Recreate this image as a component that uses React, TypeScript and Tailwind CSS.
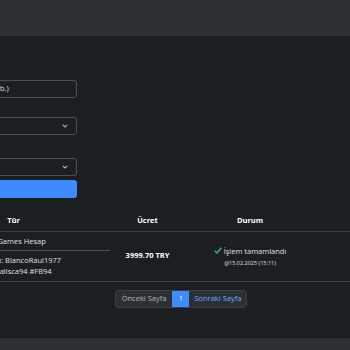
import React from 'react';

const Chevron = () => (
  <svg width="6" height="4" viewBox="0 0 6 4" className="shrink-0">
    <path d="M0.8 0.8 L3 3 L5.2 0.8" fill="none" stroke="#adb5bd" strokeWidth="1.1" />
  </svg>
);

const Check = () => (
  <svg width="8" height="7" viewBox="0 0 8 7" className="shrink-0">
    <path d="M0.8 3.8 L3 6 L7.4 0.8" fill="none" stroke="#2fb380" strokeWidth="1.5" />
  </svg>
);

export default function App() {
  return (
    <div
      className="w-[350px] h-[350px] overflow-hidden bg-[#1b1f22] text-[#dee2e6] flex flex-col"
      style={{ fontFamily: '"Open Sans", "Noto Sans", sans-serif' }}
    >
      {/* navbar */}
      <div className="h-[36px] shrink-0 bg-[#2b3035]" />

      <div className="flex-1 flex flex-col">
        {/* filter form, partly out of view on the left */}
        <div className="w-[179px] -ml-[102px] mt-[44px] flex flex-col text-[7.5px]">
          <div className="h-[18px] border border-[#495057] rounded-[3px] flex items-center px-[8px]">
            <span className="whitespace-nowrap">Ara (kullanıcı adı, e-posta vb.)</span>
          </div>
          <label className="h-[19px] flex items-center">Tür</label>
          <div className="h-[18px] border border-[#495057] rounded-[3px] flex items-center justify-between px-[8px]">
            <span>Tümü</span>
            <Chevron />
          </div>
          <label className="h-[23px] flex items-center">Durum</label>
          <div className="h-[18px] border border-[#495057] rounded-[3px] flex items-center justify-between px-[8px]">
            <span>Tümü</span>
            <Chevron />
          </div>
          <button className="mt-[4px] h-[18px] rounded-[3px] bg-[#3d8bfd] text-white">Filtrele</button>
        </div>

        {/* orders table */}
        <table className="mt-[12px] -ml-[88px] w-[470px] table-fixed border-collapse text-[7.5px]">
          <colgroup>
            <col className="w-[203px]" />
            <col className="w-[65px]" />
            <col className="w-[140px]" />
            <col />
          </colgroup>
          <thead>
            <tr className="h-[21px] border-b border-[#3a3f44] font-bold text-white">
              <th className="text-center pt-[1px]">Tür</th>
              <th className="text-center pt-[1px]">Ücret</th>
              <th className="text-center pt-[1px]">Durum</th>
              <th />
            </tr>
          </thead>
          <tbody>
            <tr className="h-[50px] border-b border-[#3a3f44]">
              <td className="px-[5px] text-center align-middle">
                <div className="pb-[3px] border-b border-[#495057] leading-[12px]">Epic Games Hesap</div>
                <div className="pt-[4px] leading-[11px]">
                  <div>Hesap Adı: BlancoRaul1977</div>
                  <div>Şifre: Kalisca94 #FB94</div>
                </div>
              </td>
              <td className="text-center font-bold text-white">3999.70 TRY</td>
              <td className="text-center">
                <div className="flex items-center justify-center gap-[2px] leading-[12px]">
                  <Check />
                  <span>İşlem tamamlandı</span>
                </div>
                <div className="text-[5.5px] mt-[2px]">@15.02.2025 (15:11)</div>
              </td>
              <td />
            </tr>
          </tbody>
        </table>

        {/* pagination */}
        <div className="mt-[8px] flex justify-center pl-[12px] text-[7.5px]">
          <div className="flex h-[18px] rounded-[3px] overflow-hidden border border-[#3a3f44]">
            <span className="px-[6px] flex items-center bg-[#2b3035] text-[#adb5bd]">Önceki Sayfa</span>
            <span className="w-[17px] flex items-center justify-center bg-[#3d8bfd] text-white">1</span>
            <span className="px-[5px] flex items-center bg-[#2b3035] text-[#6ea8fe]">Sonraki Sayfa</span>
          </div>
        </div>
      </div>

      {/* footer */}
      <div className="h-[13px] shrink-0 bg-[#2b3035] border-t border-[#16191c]" />
    </div>
  );
}
